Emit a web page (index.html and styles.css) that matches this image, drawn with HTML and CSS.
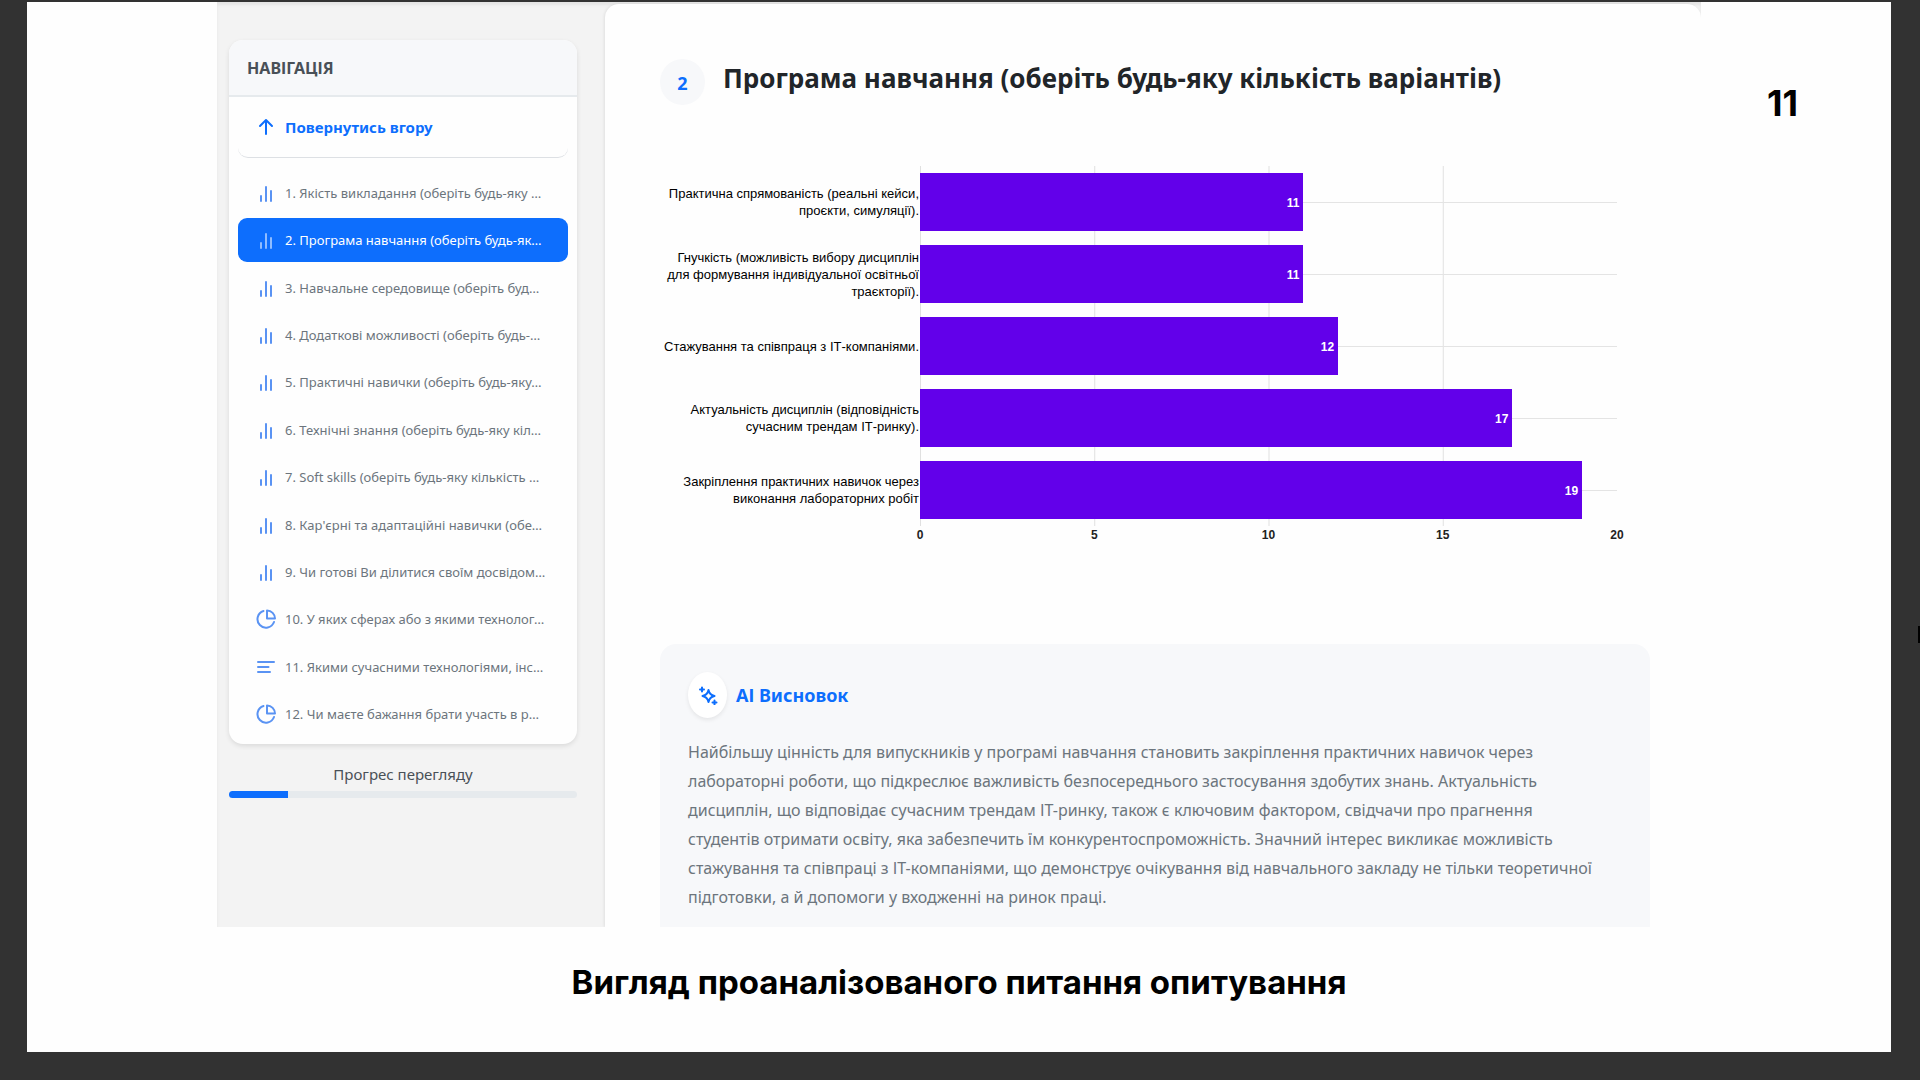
FILE: index.html
```html
<!DOCTYPE html>
<html lang="uk">
<head>
<meta charset="utf-8">
<title>Вигляд проаналізованого питання опитування</title>
<link rel="stylesheet" href="styles.css">
</head>
<body>
<svg class="sprite" aria-hidden="true">
  <symbol id="i-up" viewBox="0 0 20 20"><path d="M10 17V3M4 9l6-6 6 6"/></symbol>
  <symbol id="i-bars" viewBox="0 0 20 20"><path d="M5 18v-5M10 18V4M15 18V8"/></symbol>
  <symbol id="i-pie" viewBox="0 0 20 20"><path d="M7.500 2A8.500 8.500 0 1 0 18 13M11 1.500V9.500h8A8 8 0 0 0 11 1.500z"/></symbol>
  <symbol id="i-text" viewBox="0 0 20 20"><path d="M2 5h16M2 10h10.500M2 15h12"/></symbol>
  <symbol id="i-spark" viewBox="0 0 20 20"><path d="M10.500 5c.8 3.800 2.200 5.200 6 6-3.800.8-5.200 2.200-6 6-.8-3.800-2.200-5.200-6-6 3.800-.8 5.200-2.200 6-6zM4 2.500v4M2 4.500h4M16.500 15.500v4M14.500 17.500h4"/></symbol>
</svg>
<main class="slide">
  <section class="app">
    <aside class="sidebar">
      <nav class="card">
        <h2 class="card-head">НАВІГАЦІЯ</h2>
        <a class="item back" href="#top"><svg class="icon"><use href="#i-up"/></svg>Повернутись вгору</a>
        <ul class="list">
          <li><a class="item" href="#q1"><svg class="icon"><use href="#i-bars"/></svg>1. Якість викладання (оберіть будь-яку …</a></li>
          <li><a class="item active" href="#q2"><svg class="icon"><use href="#i-bars"/></svg>2. Програма навчання (оберіть будь-як…</a></li>
          <li><a class="item" href="#q3"><svg class="icon"><use href="#i-bars"/></svg>3. Навчальне середовище (оберіть буд…</a></li>
          <li><a class="item" href="#q4"><svg class="icon"><use href="#i-bars"/></svg>4. Додаткові можливості (оберіть будь-…</a></li>
          <li><a class="item" href="#q5"><svg class="icon"><use href="#i-bars"/></svg>5. Практичні навички (оберіть будь-яку…</a></li>
          <li><a class="item" href="#q6"><svg class="icon"><use href="#i-bars"/></svg>6. Технічні знання (оберіть будь-яку кіл…</a></li>
          <li><a class="item" href="#q7"><svg class="icon"><use href="#i-bars"/></svg>7. Soft skills (оберіть будь-яку кількість …</a></li>
          <li><a class="item" href="#q8"><svg class="icon"><use href="#i-bars"/></svg>8. Кар'єрні та адаптаційні навички (обе…</a></li>
          <li><a class="item" href="#q9"><svg class="icon"><use href="#i-bars"/></svg>9. Чи готові Ви ділитися своїм досвідом…</a></li>
          <li><a class="item" href="#q10"><svg class="icon"><use href="#i-pie"/></svg>10. У яких сферах або з якими технолог…</a></li>
          <li><a class="item" href="#q11"><svg class="icon"><use href="#i-text"/></svg>11. Якими сучасними технологіями, інс…</a></li>
          <li><a class="item" href="#q12"><svg class="icon"><use href="#i-pie"/></svg>12. Чи маєте бажання брати участь в р…</a></li>
        </ul>
      </nav>
      <p class="progress-label">Прогрес перегляду</p>
      <div class="progress" role="progressbar" aria-valuenow="17" aria-valuemin="0" aria-valuemax="100" aria-label="Прогрес перегляду"><div class="progress-fill" style="width:17%"></div></div>
    </aside>
    <article class="question" id="q2">
      <header class="q-head">
        <span class="q-num">2</span>
        <h1 class="q-title">Програма навчання (оберіть будь-яку кількість варіантів)</h1>
      </header>
      <div class="chart">
        <div class="label">Практична спрямованість (реальні кейси,<br>проєкти, симуляції).</div>
        <div class="track"><div class="bar" style="width:55%">11</div></div>
        <div class="label">Гнучкість (можливість вибору дисциплін<br>для формування індивідуальної освітньої<br>траєкторії).</div>
        <div class="track"><div class="bar" style="width:55%">11</div></div>
        <div class="label">Стажування та співпраця з ІТ-компаніями.</div>
        <div class="track"><div class="bar" style="width:60%">12</div></div>
        <div class="label">Актуальність дисциплін (відповідність<br>сучасним трендам ІТ-ринку).</div>
        <div class="track"><div class="bar" style="width:85%">17</div></div>
        <div class="label">Закріплення практичних навичок через<br>виконання лабораторних робіт</div>
        <div class="track"><div class="bar" style="width:95%">19</div></div>
        <div class="ticks"><span>0</span><span>5</span><span>10</span><span>15</span><span>20</span></div>
      </div>
      <section class="summary">
        <h2 class="s-head"><span class="s-icon"><svg class="icon"><use href="#i-spark"/></svg></span>АІ Висновок</h2>
        <p class="s-text">Найбільшу цінність для випускників у програмі навчання становить закріплення практичних навичок через<br>лабораторні роботи, що підкреслює важливість безпосереднього застосування здобутих знань. Актуальність<br>дисциплін, що відповідає сучасним трендам ІТ-ринку, також є ключовим фактором, свідчачи про прагнення<br>студентів отримати освіту, яка забезпечить їм конкурентоспроможність. Значний інтерес викликає можливість<br>стажування та співпраці з ІТ-компаніями, що демонструє очікування від навчального закладу не тільки теоретичної<br>підготовки, а й допомоги у входженні на ринок праці.</p>
      </section>
    </article>
  </section>
  <div class="page-no">11</div>
  <h2 class="caption">Вигляд проаналізованого питання опитування</h2>
</main>
<div class="edge"></div>
</body>
</html>
```
FILE: styles.css
```css
* { box-sizing: border-box; }
body {
  margin: 0;
  min-height: 100vh;
  padding: 2px 29px 28px 27px;
  background: #323232;
  font-family: "Noto Sans", "Open Sans", sans-serif;
  position: relative;
}
h1, h2, p, ul { margin: 0; padding: 0; }
ul { list-style: none; }
.sprite { display: none; }
.icon {
  width: 20px;
  height: 20px;
  flex: none;
  fill: none;
  stroke: currentColor;
  stroke-width: 2;
  stroke-linecap: round;
  stroke-linejoin: round;
}

.slide {
  display: grid;
  grid-template-columns: 190px minmax(0, 1fr) 190px;
  background: #fefefe;
  padding-bottom: 48px;
}
.app {
  grid-column: 2;
  display: flex;
  overflow: hidden;
  background: #f3f3f3;
  box-shadow: inset 0 3px 3px #e4e4e4;
}
.page-no {
  padding: 79px 0 0 66px;
  font: 700 36px/44px Inter, sans-serif;
  color: #000;
}
.caption {
  grid-column: 1 / -1;
  padding-top: 33px;
  text-align: center;
  font: 700 33px/44px Inter, sans-serif;
  color: #000;
}

.sidebar { width: 388px; flex: none; padding: 38px 28px 0 12px; }
.card {
  background: #fefefe;
  border-radius: 14px;
  box-shadow: 0 2px 5px rgba(0, 0, 0, .1);
  padding-bottom: 8px;
}
.card-head {
  height: 57px;
  padding: 0 18px;
  border-bottom: 2px solid #e6eaed;
  border-radius: 14px 14px 0 0;
  background: #f7f8fa;
  color: #495057;
  font-size: 16px;
  line-height: 56px;
}
.item {
  display: flex;
  align-items: center;
  gap: 9px;
  height: 44px;
  margin: 0 9px;
  padding-left: 18px;
  border-radius: 9px;
  color: #6c757d;
  font-size: 13px;
  white-space: nowrap;
  text-decoration: none;
}
.item .icon { color: #5a93f3; }
.back {
  height: 61px;
  border-radius: 10px;
  border-bottom: 1px solid #dde0e4;
  color: #0d6efd;
  font-size: 15px;
  font-weight: 700;
}
.item.back .icon { color: #0d6efd; }
.item.active { background: #0d6efd; color: #fff; }
.item.active .icon { color: #8fbcff; }
.list {
  display: grid;
  align-content: space-between;
  min-height: 565px;
  margin-top: 13px;
}
.progress-label {
  padding-top: 18px;
  text-align: center;
  color: #495057;
  font-size: 15px;
  line-height: 24px;
}
.progress {
  height: 7px;
  margin-top: 5px;
  border-radius: 4px;
  background: #e6eaed;
  overflow: hidden;
}
.progress-fill { height: 100%; background: #0d6efd; }

.question {
  flex: 1;
  min-width: 0;
  margin-top: 2px;
  padding: 55px 51px 0 55px;
  border-radius: 14px 14px 0 0;
  background: #fefefe;
  box-shadow: -1px 0 3px rgba(0, 0, 0, .08);
}
.q-head { display: flex; gap: 18px; }
.q-num {
  width: 45px;
  height: 46px;
  border-radius: 50%;
  background: #f7f8fa;
  color: #0d6efd;
  font-size: 18px;
  font-weight: 700;
  line-height: 48px;
  text-align: center;
}
.q-title { color: #212529; font-size: 26px; line-height: 38px; }
.chart {
  display: grid;
  grid-template-columns: 260px 1fr;
  margin: 61px 33px 0 0;
  font-family: "Liberation Sans", Arial, sans-serif;
  font-size: 12px;
  line-height: 17px;
  color: #000;
}
.label { align-self: center; padding-right: 1px; text-align: right; font-size: 13px; white-space: nowrap; }
.track {
  display: flex;
  align-items: center;
  height: 72px;
  background:
    linear-gradient(#e4e4e4, #e4e4e4) 0 50% / 100% 1px no-repeat,
    linear-gradient(to right, #e0e0e0 1px, transparent 1px) 0 0 / 25% 100%;
}
.bar {
  height: 58px;
  padding-right: 4px;
  background: #6200ea;
  color: #fff;
  font-weight: 700;
  line-height: 60px;
  text-align: right;
}
.ticks {
  grid-column: 2;
  display: flex;
  justify-content: space-between;
  padding-top: 1px;
  font-weight: 700;
  color: #222;
}
.ticks span { display: flex; justify-content: center; width: 0; }

.summary {
  margin-top: 100px;
  padding: 28px 28px 15px;
  border-radius: 16px 16px 0 0;
  background: #f7f8fa;
}
.s-head {
  display: flex;
  align-items: center;
  gap: 9px;
  color: #0d6efd;
  font-size: 18px;
  line-height: 24px;
}
.s-icon {
  display: grid;
  place-items: center;
  width: 39px;
  height: 46px;
  border-radius: 50%;
  background: #fff;
  box-shadow: 0 2px 4px rgba(0, 0, 0, .08);
}
.s-text {
  margin-top: 20px;
  color: #6c757d;
  font-size: 16px;
  line-height: 29px;
  white-space: nowrap;
}
.edge {
  position: absolute;
  top: 626px;
  right: 0;
  width: 2px;
  height: 17px;
  background: #000;
}
```
